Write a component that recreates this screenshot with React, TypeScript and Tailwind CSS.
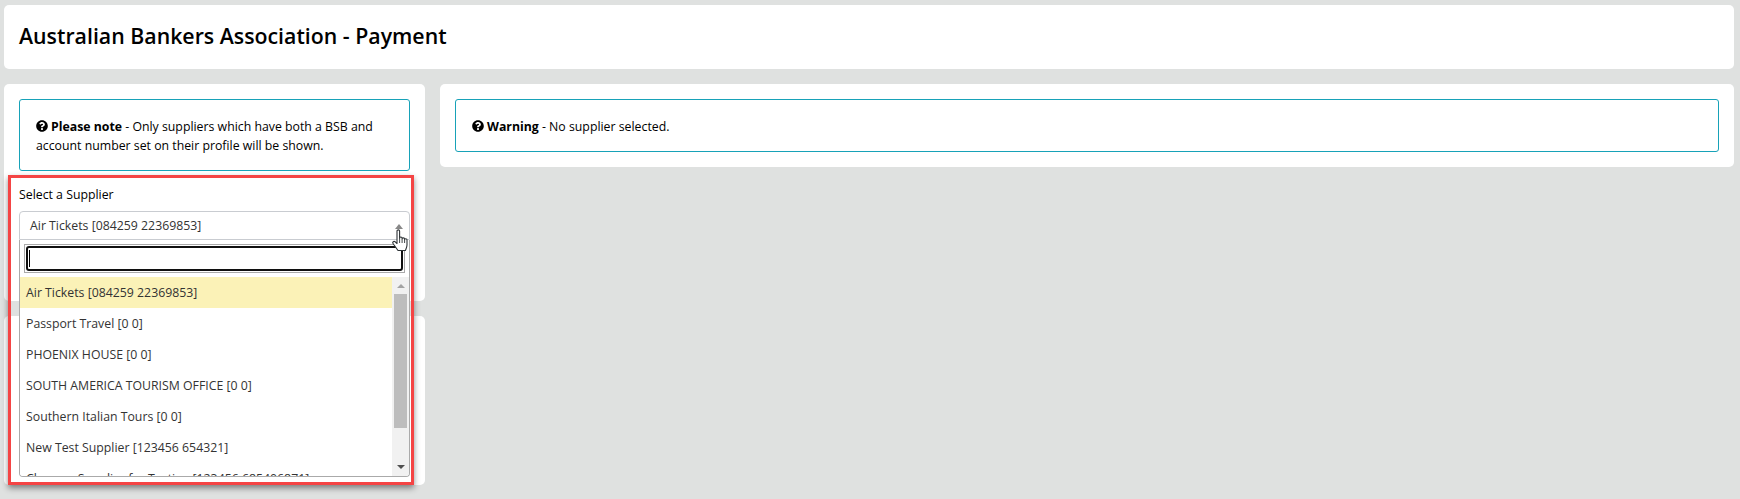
import { FaQuestionCircle } from "react-icons/fa";

const suppliers = [
  "Air Tickets [084259 22369853]",
  "Passport Travel [0 0]",
  "PHOENIX HOUSE [0 0]",
  "SOUTH AMERICA TOURISM OFFICE [0 0]",
  "Southern Italian Tours [0 0]",
  "New Test Supplier [123456 654321]",
  "Cheaper Supplier for Testing [123456 685406871]",
];

const HandCursor = () => (
  <svg width="18" height="23" viewBox="0 0 18 23" className="absolute left-[391px] top-[229px]">
    <path
      d="M6 2c0-1.500 2.600-1.500 2.600 0V9c0-1.300 2.500-1.300 2.500 0v.8c0-1.300 2.500-1.300 2.500 0v.8c0-1.200 2.400-1.200 2.400.2V16c0 2-.8 3.500-1.600 5.500H7L2 14.500c-1-1.300.8-2.800 2.200-1.700L6 14.500z"
      fill="#fff"
      stroke="#2f3437"
      strokeWidth="1.100"
      strokeLinejoin="round"
    />
    <path d="M8.600 9v5M11.100 10v4M13.600 11v3" stroke="#2f3437" strokeWidth="0.900" fill="none" />
  </svg>
);

const SupplierDropdown = () => (
  <div className="absolute left-[19px] top-[211px] w-[391px] rounded-t-[4px] text-[12.3px] text-[#333]">
    <div className="relative flex h-[29px] items-center rounded-t-[4px] border border-[#c9ccd1] bg-white pl-[10px] pt-px text-[#333]">
      Air Tickets [084259 22369853]
      <span className="absolute right-[6px] top-[12px] h-0 w-0 border-x-[4px] border-b-[5px] border-x-transparent border-b-[#888]" />
    </div>
    <div className="h-[237px] overflow-hidden rounded-b-[4px] border border-t-0 border-[#aaa] bg-white">
      <div className="mx-[4px] mt-[4px] h-[29px] border border-[#aaa] p-px">
        <div className="flex h-full items-center rounded-[3px] border-2 border-[#101010] bg-white pl-px">
          <span className="h-[17px] w-px bg-black" />
        </div>
      </div>
      <div className="mt-[4px] flex h-[200px]">
        <ul className="min-w-0 flex-1 overflow-hidden">
          {suppliers.map((s, i) => (
            <li
              key={s}
              className={
                "flex h-[31px] shrink-0 items-center whitespace-nowrap pl-[6px] pt-px " +
                (i === 0 ? "bg-[#fbf2b7]" : "bg-white")
              }
            >
              {s}
            </li>
          ))}
        </ul>
        <div className="flex w-[17px] shrink-0 flex-col items-center bg-[#f1f1f1]">
          <span className="mt-[7px] h-0 w-0 border-x-[4px] border-b-[4px] border-x-transparent border-b-[#a3a3a3]" />
          <span className="mt-[6px] h-[134px] w-[13px] bg-[#bdbdbd]" />
          <span className="mt-[37px] h-0 w-0 border-x-[4px] border-t-[4px] border-x-transparent border-t-[#505050]" />
        </div>
      </div>
    </div>
  </div>
);

export default function App() {
  return (
    <div
      className="relative h-[499px] overflow-hidden bg-[#dfe1e0] pl-[4px] pr-[6px] pt-[5px] text-black"
      style={{ fontFamily: '"Open Sans", "Noto Sans", sans-serif' }}
    >
      <div className="flex h-[64px] items-center rounded-[5px] bg-white pb-[2px] pl-[15px]">
        <h1 className="text-[21.3px] font-semibold">Australian Bankers Association - Payment</h1>
      </div>

      <div className="mt-[15px] flex items-start gap-[15px]">
        <div className="w-[421px] shrink-0">
          <div className="h-[217px] rounded-[5px] bg-white p-[15px]">
            <div className="h-[72px] rounded-[3px] border border-[#17a2b8] px-[16px] pt-[17px] text-[12.3px] leading-[19px]">
              <FaQuestionCircle className="mr-[3px] inline-block align-[-1px] text-[12px]" />
              <b className="font-bold">Please note</b> - Only suppliers which have both a BSB and account number set on their profile will be shown.
            </div>
            <label className="mt-[15px] block text-[12.3px]">Select a Supplier</label>
          </div>
          <div className="mt-[15px] h-[169px] rounded-[5px] bg-white" />
        </div>

        <div className="h-[83px] min-w-0 flex-1 rounded-[5px] bg-white p-[15px]">
          <div className="h-[53px] rounded-[3px] border border-[#17a2b8] px-[16px] pt-[17px] text-[12.3px] leading-[19px]">
            <FaQuestionCircle className="mr-[3px] inline-block align-[-1px] text-[12px]" />
            <b className="font-bold">Warning</b> - No supplier selected.
          </div>
        </div>
      </div>

      <SupplierDropdown />
      {/* red highlight drawn over the screenshot */}
      <div className="pointer-events-none absolute left-[8px] top-[175px] h-[310px] w-[406px] border-[3px] border-[#f44444] shadow-[0_3px_6px_rgba(0,0,0,0.45)]" />
      <HandCursor />
    </div>
  );
}
